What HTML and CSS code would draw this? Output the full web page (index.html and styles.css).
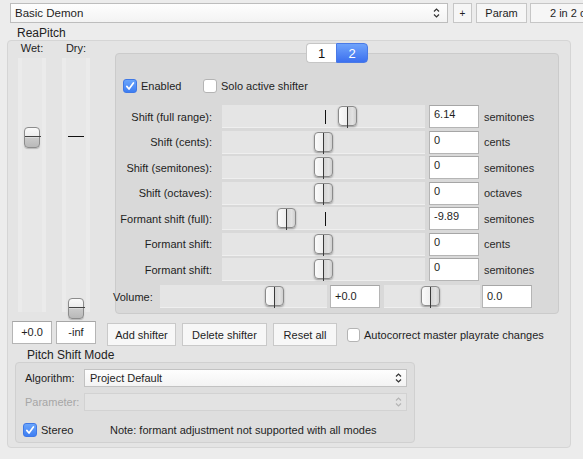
FILE: index.html
```html
<!DOCTYPE html>
<html>
<head>
<meta charset="utf-8">
<title>ReaPitch</title>
<link rel="stylesheet" href="styles.css">
</head>
<body>
<div class="topbar">
  <div class="select preset"><span>Basic Demon</span><svg class="chev" width="7" height="12" viewBox="0 0 7 12"><path d="M1 4.5 L3.5 2 L6 4.5 M1 7.5 L3.5 10 L6 7.5" fill="none" stroke="#333" stroke-width="1.2"/></svg></div>
  <div class="btn plus">+</div>
  <div class="btn param">Param</div>
  <div class="btn io">2 in 2 out</div>
</div>
<div class="title">ReaPitch</div>
<div class="group outer">
  <div class="main">
    <div class="wetdry">
      <div class="wd-col">
        <div class="wd-label">Wet:</div>
        <div class="vtrack">
          <div class="mark h" style="top:78px"></div>
          <div class="vthumb" style="top:69px"></div>
        </div>
        <div class="field wd-field">+0.0</div>
      </div>
      <div class="wd-col">
        <div class="wd-label">Dry:</div>
        <div class="vtrack">
          <div class="mark h" style="top:78px"></div>
          <div class="vthumb" style="top:240px"></div>
        </div>
        <div class="field wd-field">-inf</div>
      </div>
    </div>
    <div class="shifter">
      <div class="tabs"><span class="tab">1</span><span class="tab active">2</span></div>
      <div class="panel">
        <div class="checks">
          <label class="check first"><span class="cb on"><svg width="12" height="12" viewBox="0 0 12 12"><path d="M2.8 6.4 L5 9 L9.4 3" fill="none" stroke="#fff" stroke-width="1.7" stroke-linecap="round" stroke-linejoin="round"/></svg></span>Enabled</label>
          <label class="check"><span class="cb"></span>Solo active shifter</label>
        </div>
        <div class="rows">
          <div class="rlabel">Shift (full range):</div>
          <div class="track"><div class="mark v" style="left:103px"></div><div class="hthumb" style="left:116px"></div></div>
          <div class="field">6.14</div>
          <div class="unit">semitones</div>

          <div class="rlabel">Shift (cents):</div>
          <div class="track"><div class="hthumb" style="left:92px"></div></div>
          <div class="field">0</div>
          <div class="unit">cents</div>

          <div class="rlabel">Shift (semitones):</div>
          <div class="track"><div class="hthumb" style="left:92px"></div></div>
          <div class="field">0</div>
          <div class="unit">semitones</div>

          <div class="rlabel">Shift (octaves):</div>
          <div class="track"><div class="hthumb" style="left:92px"></div></div>
          <div class="field">0</div>
          <div class="unit">octaves</div>

          <div class="rlabel">Formant shift (full):</div>
          <div class="track"><div class="mark v" style="left:103px"></div><div class="hthumb" style="left:55px"></div></div>
          <div class="field">-9.89</div>
          <div class="unit">semitones</div>

          <div class="rlabel">Formant shift:</div>
          <div class="track"><div class="hthumb" style="left:92px"></div></div>
          <div class="field">0</div>
          <div class="unit">cents</div>

          <div class="rlabel">Formant shift:</div>
          <div class="track"><div class="hthumb" style="left:92px"></div></div>
          <div class="field">0</div>
          <div class="unit">semitones</div>
        </div>
        <div class="volume">
          <div class="vlabel">Volume:</div>
          <div class="track vol1"><div class="hthumb" style="left:105px"></div></div>
          <div class="field vfield f1">+0.0</div>
          <div class="track vol2"><div class="hthumb" style="left:37px"></div></div>
          <div class="field vfield f2">0.0</div>
        </div>
      </div>
      <div class="actions">
        <div class="btn act add">Add shifter</div>
        <div class="btn act del">Delete shifter</div>
        <div class="btn act reset">Reset all</div>
        <label class="check auto"><span class="cb"></span>Autocorrect master playrate changes</label>
      </div>
    </div>
  </div>
  <div class="title sub">Pitch Shift Mode</div>
  <div class="group mode">
    <div class="mode-grid">
      <div class="mlabel">Algorithm:</div>
      <div class="select msel"><span>Project Default</span><svg class="chev" width="7" height="12" viewBox="0 0 7 12"><path d="M1 4.5 L3.5 2 L6 4.5 M1 7.5 L3.5 10 L6 7.5" fill="none" stroke="#333" stroke-width="1.2"/></svg></div>
      <div class="mlabel disabled">Parameter:</div>
      <div class="select msel off"><span></span><svg class="chev" width="7" height="12" viewBox="0 0 7 12"><path d="M1 4.5 L3.5 2 L6 4.5 M1 7.5 L3.5 10 L6 7.5" fill="none" stroke="#b5b5b5" stroke-width="1.2"/></svg></div>
    </div>
    <div class="stereo-row">
      <label class="check stereo"><span class="cb on"><svg width="12" height="12" viewBox="0 0 12 12"><path d="M2.8 6.4 L5 9 L9.4 3" fill="none" stroke="#fff" stroke-width="1.7" stroke-linecap="round" stroke-linejoin="round"/></svg></span>Stereo</label>
      <span class="note">Note: formant adjustment not supported with all modes</span>
    </div>
  </div>
</div>
</body>
</html>
```

FILE: styles.css
```css
* { box-sizing: border-box; }
html, body { margin: 0; padding: 0; }
body {
  width: 583px;
  height: 459px;
  overflow: hidden;
  background: #ececec;
  font-family: "Liberation Sans", Arial, sans-serif;
  font-size: 11px;
  color: #1e1e1e;
}

/* top bar */
.topbar {
  display: flex;
  align-items: center;
  height: 26px;
  padding: 3px 0 3px 10px;
}
.select {
  display: flex;
  align-items: center;
  justify-content: space-between;
  flex: none;
  border: 1px solid #bdbdbd;
  background: linear-gradient(#fefefe, #f3f3f3);
}
.preset {
  width: 438px;
  height: 20px;
  padding: 0 7px 0 4px;
  font-size: 11.5px;
}
.chev { flex: none; }
.btn {
  flex: none;
  display: flex;
  align-items: center;
  justify-content: center;
  height: 20px;
  border: 1px solid #c6c6c6;
  background: #f6f6f6;
  white-space: nowrap;
}
.plus { width: 19px; margin-left: 5px; font-size: 10px; }
.param { width: 51px; margin-left: 4px; }
.io {
  width: 92px;
  margin-left: 3px;
  justify-content: flex-start;
  padding-left: 19px;
}

.title {
  font-size: 12px;
  line-height: 14px;
  height: 14px;
  padding-left: 17px;
  color: #222;
}

/* outer group */
.group {
  border: 1px solid #d5d5d5;
  border-radius: 4px;
}
.outer {
  margin-left: 7px;
  width: 564px;
  height: 408px;
  background: #e4e4e4;
  padding: 2px 0 0 2px;
}
.main {
  display: flex;
  height: 303px;
}

/* wet / dry */
.wetdry {
  display: flex;
  width: 88px;
  margin-right: 8px;
  flex: none;
}
.wd-col {
  width: 44px;
  display: flex;
  flex-direction: column;
  align-items: center;
}
.wd-label {
  height: 11px;
  line-height: 11px;
}
.vtrack {
  position: relative;
  width: 28px;
  height: 254px;
  margin-top: 4px;
  background: #e7e7e7;
  border-left: 4px solid #ebebeb;
  border-right: 4px solid #ebebeb;
}
.vthumb {
  position: absolute;
  left: 2px;
  width: 16px;
  height: 21px;
  border: 1px solid #8c8c8c;
  border-radius: 4px;
  background: linear-gradient(#fafafa, #ececec 45%, #c9c9c9 55%, #b9b9b9);
  box-shadow: 0 1px 1px rgba(0,0,0,0.2);
}
.vthumb::after {
  content: "";
  position: absolute;
  left: 0;
  right: -2px;
  top: 8px;
  height: 1px;
  background: #444;
}
.mark { position: absolute; background: #111; }
.mark.h { left: 2px; width: 16px; height: 1px; }
.mark.v { top: 5px; width: 1px; height: 14px; }

.field {
  background: #fff;
  border: 1px solid #b5b5b5;
  border-top-color: #a6a6a6;
  height: 23px;
  padding: 2px 4px 0;
  line-height: 13px;
  white-space: nowrap;
}
.wd-field {
  width: 40px;
  margin-top: 9px;
  text-align: center;
  padding-top: 4px;
}

/* shifter */
.shifter {
  width: 453px;
  flex: none;
  display: flex;
  flex-direction: column;
}
.tabs {
  display: flex;
  justify-content: center;
  margin-left: 9px;
  width: 444px;
  height: 20px;
  margin-bottom: -10px;
  position: relative;
  z-index: 1;
}
.tab {
  width: 30px;
  height: 20px;
  display: flex;
  align-items: center;
  justify-content: center;
  font-size: 13px;
  background: #fff;
  border: 1px solid #c6c6c6;
  border-right: none;
  border-radius: 4px 0 0 4px;
  color: #111;
}
.tab.active {
  width: 32px;
  border: 1px solid #4a7ae6;
  border-radius: 0 4px 4px 0;
  background: linear-gradient(#6fa3fb, #3c70ef);
  color: #fff;
}
.panel {
  margin-left: 9px;
  width: 444px;
  height: 261px;
  border: 1px solid #cbcbcb;
  border-radius: 4px;
  background: #d9d9d9;
  padding: 25px 0 0 0;
}
.checks {
  display: flex;
  align-items: center;
  height: 14px;
  padding-left: 7px;
}
.check {
  display: flex;
  align-items: center;
  white-space: nowrap;
}
.check.first { width: 80px; }
.cb {
  flex: none;
  width: 14px;
  height: 14px;
  margin-right: 4px;
  border: 1px solid #b4b4b4;
  border-radius: 3px;
  background: #fff;
  display: flex;
  align-items: center;
  justify-content: center;
}
.cb.on {
  border-color: #3f78e6;
  background: linear-gradient(#6aa5fb, #3e7ef2);
}
.rows {
  display: grid;
  grid-template-columns: 106px 203px 54px auto;
  grid-auto-rows: 23px;
  row-gap: 2.5px;
  margin-top: 12px;
}
.rlabel {
  align-self: center;
  text-align: right;
  padding-right: 10px;
  white-space: nowrap;
}
.track {
  position: relative;
  background: #e5e5e5;
  border-bottom: 1px solid #efefef;
}
.hthumb {
  position: absolute;
  top: 1px;
  width: 19px;
  height: 20px;
  border: 1px solid #8b8b8b;
  border-radius: 4px;
  background: linear-gradient(to right, #fbfbfb, #eeeeee 48%, #d4d4d4 52%, #e2e2e2 80%, #cfcfcf);
  box-shadow: 0 1px 2px rgba(0,0,0,0.35);
}
.hthumb::after {
  content: "";
  position: absolute;
  left: 8px;
  top: 0;
  bottom: -3px;
  width: 1px;
  background: #3a3a3a;
}
.rows .field {
  justify-self: end;
  width: 50px;
}
.unit {
  align-self: center;
  padding-left: 5px;
  color: #2a2a2a;
}
.volume {
  display: flex;
  height: 23px;
  margin-top: 4px;
  margin-left: -3px;
}
.vlabel {
  width: 47px;
  align-self: center;
}
.vol1 { width: 167px; }
.vol2 { width: 96px; margin-left: 4px; }
.vfield { width: 50px; padding-top: 4px; }
.f1 { margin-left: 3px; }
.f2 { margin-left: 2px; }

.actions {
  display: flex;
  align-items: center;
  height: 23px;
  margin-top: 9px;
  margin-left: 1px;
}
.act {
  height: 23px;
  background: #f7f7f7;
  border-color: #c9c9c9;
  margin-right: 6px;
}
.add { width: 69px; }
.del { width: 85px; }
.reset { width: 64px; margin-right: 10px; }
.auto .cb { width: 13px; }

/* pitch shift mode */
.sub { margin-top: 2px; }
.mode {
  margin-left: 5px;
  width: 400px;
  height: 81px;
  background: #dedede;
  border-color: #d0d0d0;
  padding: 6px 7px 0 7px;
}
.mode-grid {
  display: grid;
  grid-template-columns: 61px 323px;
  grid-auto-rows: 18px;
  row-gap: 6px;
}
.mlabel {
  align-self: center;
  padding-left: 2px;
}
.mlabel.disabled { color: #a6a6a6; }
.msel {
  height: 18px;
  padding: 0 4px 0 5px;
  border-color: #c2c2c2;
}
.msel.off {
  background: #e3e3e3;
  border-color: #d2d2d2;
}
.stereo-row {
  display: flex;
  align-items: center;
  height: 14px;
  margin-top: 12px;
}
.stereo { width: 87px; }
.note { white-space: nowrap; }
```
